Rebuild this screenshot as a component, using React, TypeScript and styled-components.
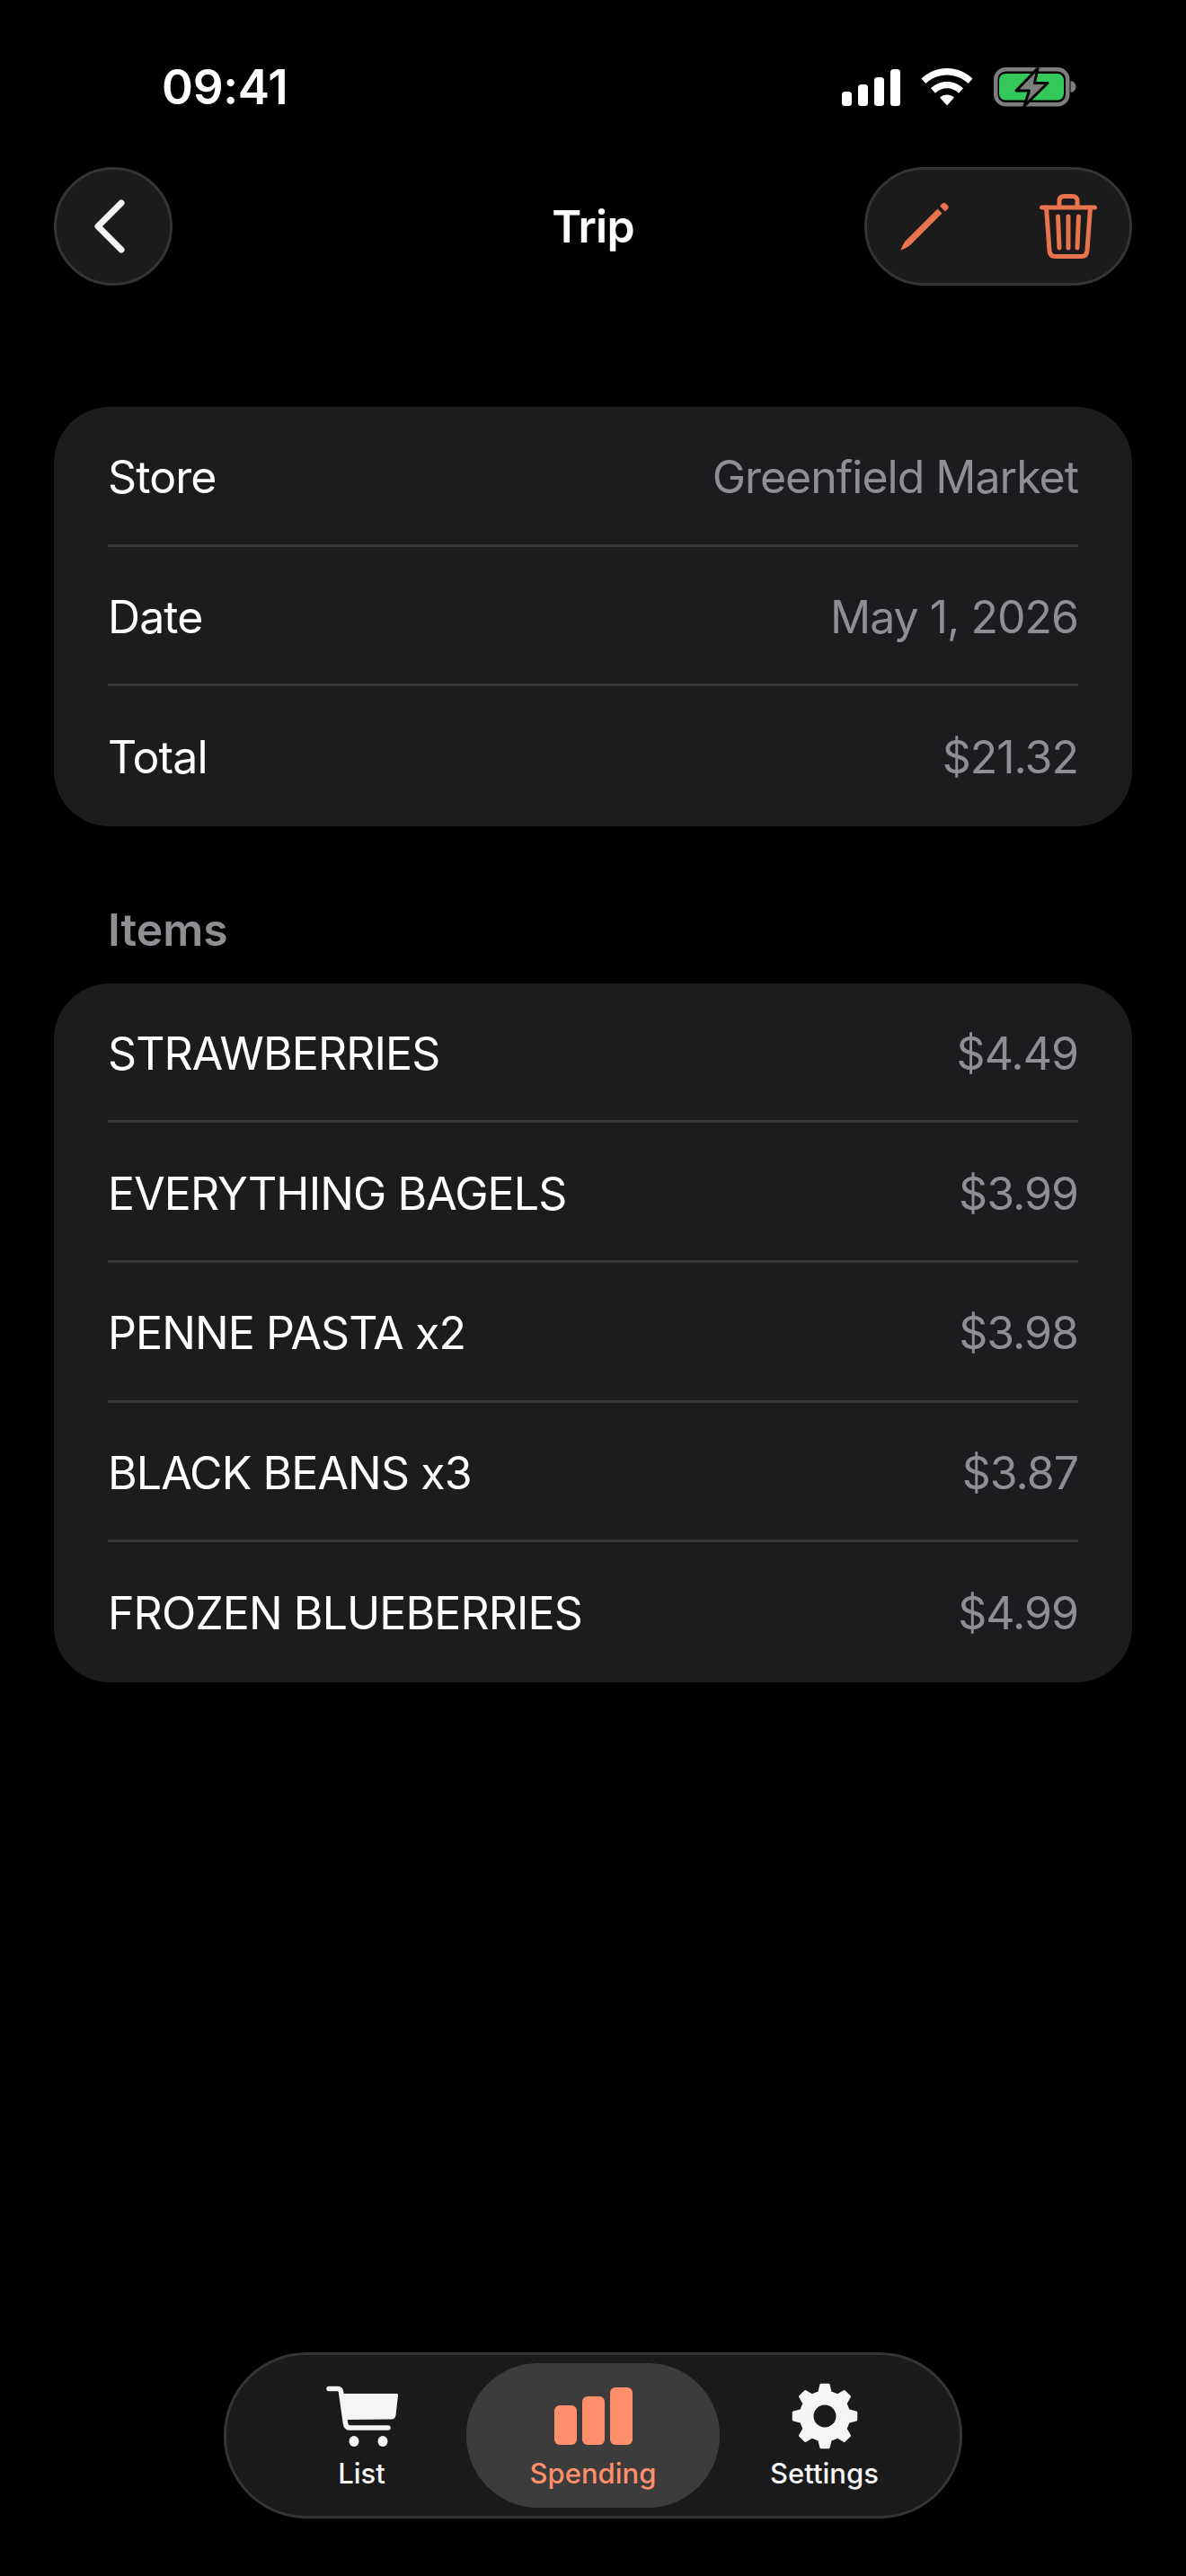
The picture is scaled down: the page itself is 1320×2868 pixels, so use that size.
import React from "react";
import styled, { createGlobalStyle } from "styled-components";

const GlobalStyle = createGlobalStyle`
  * {
    box-sizing: border-box;
  }

  html,
  body {
    margin: 0;
    padding: 0;
    background: #000;
  }

  body {
    font-family: Inter, "Liberation Sans", sans-serif;
    color: #fff;
  }
`;

const Page = styled.div`
  width: 1320px;
  height: 2868px;
  display: flex;
  flex-direction: column;
  background: #000;
`;

const StatusBar = styled.div`
  height: 150px;
  padding: 44px 122px 0 180px;
  display: flex;
  align-items: center;
  justify-content: space-between;
`;

const Time = styled.span`
  font-size: 53px;
  font-weight: 600;
  letter-spacing: -0.3px;
`;

const StatusIcons = styled.div`
  display: flex;
  align-items: center;
  gap: 23px;

  > svg {
    display: block;
  }
`;

const Header = styled.header`
  margin-top: 36px;
  padding: 0 60px;
  display: grid;
  grid-template-columns: 1fr auto 1fr;
  align-items: center;
`;

const Title = styled.h1`
  margin: 0;
  font-size: 50px;
  font-weight: 600;
  letter-spacing: -0.8px;
`;

const GlassButton = styled.button`
  height: 132px;
  background: #1b1b1b;
  border: 3px solid #343434;
  border-radius: 66px;
  padding: 0;
  display: flex;
  align-items: center;
`;

const BackButton = styled(GlassButton)`
  width: 132px;
  justify-self: start;
  justify-content: center;
  padding-right: 8px;
`;

const ActionPill = styled(GlassButton)`
  width: 298px;
  justify-self: end;
  justify-content: space-between;
  padding: 0 36px 0 37px;
`;

const Content = styled.main`
  margin-top: 135px;
  padding: 0 60px;
`;

const Card = styled.section`
  background: #1c1c1e;
  border-radius: 62px;
  padding: 0 60px;
`;

const Row = styled.div`
  height: 155.6px;
  padding-top: 4px;
  display: flex;
  align-items: center;
  justify-content: space-between;
  font-size: 50px;
  border-bottom: 3px solid #38383a;

  &:last-child {
    border-bottom: 0;
    padding-top: 3px;
  }
`;

const Label = styled.span`
  color: #fff;
  letter-spacing: -0.9px;
  font-weight: 400;
`;

const Value = styled.span`
  color: #8e8e93;
  letter-spacing: -1px;
`;

const SectionTitle = styled.h2`
  margin: 85px 0 0 60px;
  height: 90px;
  font-size: 50px;
  line-height: 60px;
  font-weight: 600;
  letter-spacing: 0;
  color: #8e8e93;
`;

const TabBarWrap = styled.div`
  margin-top: auto;
  padding-bottom: 64px;
  display: flex;
  justify-content: center;
`;

const TabBar = styled.nav`
  width: 822px;
  height: 185px;
  background: #1a1a1a;
  border: 3px solid #343434;
  border-radius: 92px;
  padding: 9px 0 0;
  display: flex;
  justify-content: center;
`;

const Tab = styled.div<{ $active?: boolean }>`
  width: ${(p) => (p.$active ? "282px" : "233px")};
  height: 161px;
  border-radius: 80px;
  background: ${(p) => (p.$active ? "#3c3c3c" : "transparent")};
  color: ${(p) => (p.$active ? "#ff8f6b" : "#f5f5f5")};
  display: flex;
  flex-direction: column;
  align-items: center;
  padding-top: 21px;
`;

const TabIcon = styled.div`
  height: 76px;
  display: flex;
  align-items: center;
  justify-content: center;
`;

const TabLabel = styled.span`
  margin-top: 8px;
  font-size: 31px;
  line-height: 36px;
  font-weight: 500;
`;

const ACCENT = "#e8734d";

function gearPath(cx: number, cy: number, outer: number, inner: number, hole: number) {
  const teeth = 8;
  const pts: string[] = [];
  for (let i = 0; i < teeth; i++) {
    const a = (i * Math.PI * 2) / teeth - Math.PI / 2;
    const step = (Math.PI * 2) / teeth;
    const list: [number, number][] = [
      [inner, a - step * 0.3],
      [outer, a - step * 0.15],
      [outer, a + step * 0.15],
      [inner, a + step * 0.3],
    ];
    list.forEach(([r, t]) => {
      pts.push(`${(cx + r * Math.cos(t)).toFixed(2)} ${(cy + r * Math.sin(t)).toFixed(2)}`);
    });
  }
  const ring = `M${pts.join("L")}Z`;
  const circle = `M${cx - hole} ${cy}a${hole} ${hole} 0 1 0 ${hole * 2} 0a${hole} ${hole} 0 1 0 ${-hole * 2} 0Z`;
  return ring + circle;
}

const SignalIcon = () => (
  <svg width="65" height="41" viewBox="0 0 65 41" fill="#fff">
    <rect x="0" y="25" width="11" height="16" rx="3.5" />
    <rect x="18" y="17" width="11" height="24" rx="3.5" />
    <rect x="36" y="9" width="11" height="32" rx="3.5" />
    <rect x="54" y="0" width="11" height="41" rx="3.5" />
  </svg>
);

const WifiIcon = () => (
  <svg width="58" height="42" viewBox="0 0 58 42" fill="#fff">
    <path d="M29 0C40 0 50 4.300 57.500 11.500L52.500 17C46.300 11 38 7.500 29 7.500S11.700 11 5.500 17L.5 11.500C8 4.300 18 0 29 0Z" />
    <path d="M29 15C36 15 42.300 17.700 47 22.300L42 27.700C38.500 24.300 34 22.300 29 22.300S19.500 24.300 16 27.700L11 22.300C15.700 17.700 22 15 29 15Z" />
    <path d="M29 29.500C32 29.500 34.800 30.700 36.800 32.700L29 41.500L21.200 32.700C23.200 30.700 26 29.500 29 29.500Z" />
  </svg>
);

const BatteryIcon = () => (
  <svg width="92" height="44" viewBox="0 0 92 44">
    <rect x="2.250" y="2.250" width="80" height="39" rx="11" fill="none" stroke="#7d7d7d" strokeWidth="4.500" />
    <rect x="6" y="7" width="72" height="29.500" rx="7" fill="#34c759" />
    <path d="M85.500 15c3.500 .5 6 3 6 6.500s-2.500 6-6 6.500Z" fill="#7d7d7d" />
    <path
      d="M49 1L25 26H39.500L34 43L60 17.500H45.500Z"
      fill="#7d7d7d"
      stroke="#000"
      strokeWidth="3"
      strokeLinejoin="round"
    />
  </svg>
);

const ChevronIcon = () => (
  <svg width="36" height="60" viewBox="0 0 36 60" fill="none">
    <path d="M31 4L5 30L31 56" stroke="#f5f5f5" strokeWidth="7" strokeLinecap="round" strokeLinejoin="round" />
  </svg>
);

const PencilIcon = () => (
  <svg width="54" height="54" viewBox="0 0 54 54" fill={ACCENT}>
    <path d="M41.500 7.500L46.500 12.500L11 48C8 50.500 4 52.500 .5 53.500C1.500 50 3.500 46 6 43Z" />
    <path d="M44 4.500L47 1.500C48 .5 49.500 .5 50.500 1.500L53 4C54 5 54 6.500 53 7.500L50 10.500Z" />
  </svg>
);

const TrashIcon = () => (
  <svg width="64" height="72" viewBox="0 0 64 72" fill="none" stroke={ACCENT} strokeWidth="5" strokeLinecap="round">
    <path d="M2.500 15H61.500" />
    <path d="M7.500 15L11 63C11.300 67 13.500 69.500 17.500 69.500H46.500C50.500 69.500 52.700 67 53 63L56.500 15" />
    <path d="M22 14V8C22 4.500 24 2.500 27.500 2.500H36.500C40 2.500 42 4.500 42 8V14" />
    <path d="M20.500 25L22 60M32 25V60M43.500 25L42 60" />
  </svg>
);

const CartIcon = () => (
  <svg width="80" height="68" viewBox="0 0 80 68" fill="currentColor">
    <path
      d="M3 3.500H12.500C15 3.500 16.200 4.500 16.500 7L21.500 42C22 45.500 23.500 47 26.500 47H69"
      fill="none"
      stroke="currentColor"
      strokeWidth="5.500"
      strokeLinecap="round"
      strokeLinejoin="round"
    />
    <path d="M18 9H78.500C79.700 9 80.300 9.800 80 11L77.500 33C77 36 75.500 37.500 72.500 37.500L23 38Z" />
    <ellipse cx="31" cy="62" rx="5.500" ry="6" />
    <ellipse cx="63" cy="62" rx="5.500" ry="6" />
  </svg>
);

const BarsIcon = () => (
  <svg width="87" height="64" viewBox="0 0 87 64" fill="currentColor">
    <rect x="0" y="20" width="25" height="44" rx="6" />
    <rect x="31" y="10" width="25" height="54" rx="6" />
    <rect x="62" y="0" width="25" height="64" rx="6" />
  </svg>
);

const GearIcon = () => (
  <svg width="74" height="74" viewBox="0 0 74 74" fill="currentColor" stroke="currentColor" strokeWidth="3" strokeLinejoin="round">
    <path fillRule="evenodd" d={gearPath(37, 37, 35, 27, 14)} />
  </svg>
);

const summary = [
  { label: "Store", value: "Greenfield Market" },
  { label: "Date", value: "May 1, 2026" },
  { label: "Total", value: "$21.32" },
];

const items = [
  { label: "STRAWBERRIES", value: "$4.49" },
  { label: "EVERYTHING BAGELS", value: "$3.99" },
  { label: "PENNE PASTA x2", value: "$3.98" },
  { label: "BLACK BEANS x3", value: "$3.87" },
  { label: "FROZEN BLUEBERRIES", value: "$4.99" },
];

const App: React.FC = () => {
  return (
    <Page>
      <GlobalStyle />
      <StatusBar>
        <Time>09:41</Time>
        <StatusIcons>
          <SignalIcon />
          <WifiIcon />
          <BatteryIcon />
        </StatusIcons>
      </StatusBar>

      <Header>
        <BackButton aria-label="Back">
          <ChevronIcon />
        </BackButton>
        <Title>Trip</Title>
        <ActionPill>
          <PencilIcon />
          <TrashIcon />
        </ActionPill>
      </Header>

      <Content>
        <Card>
          {summary.map((row) => (
            <Row key={row.label}>
              <Label>{row.label}</Label>
              <Value>{row.value}</Value>
            </Row>
          ))}
        </Card>

        <SectionTitle>Items</SectionTitle>

        <Card>
          {items.map((row) => (
            <Row key={row.label}>
              <Label>{row.label}</Label>
              <Value>{row.value}</Value>
            </Row>
          ))}
        </Card>
      </Content>

      <TabBarWrap>
        <TabBar>
          <Tab>
            <TabIcon>
              <CartIcon />
            </TabIcon>
            <TabLabel>List</TabLabel>
          </Tab>
          <Tab $active>
            <TabIcon>
              <BarsIcon />
            </TabIcon>
            <TabLabel>Spending</TabLabel>
          </Tab>
          <Tab>
            <TabIcon>
              <GearIcon />
            </TabIcon>
            <TabLabel>Settings</TabLabel>
          </Tab>
        </TabBar>
      </TabBarWrap>
    </Page>
  );
};

export default App;
